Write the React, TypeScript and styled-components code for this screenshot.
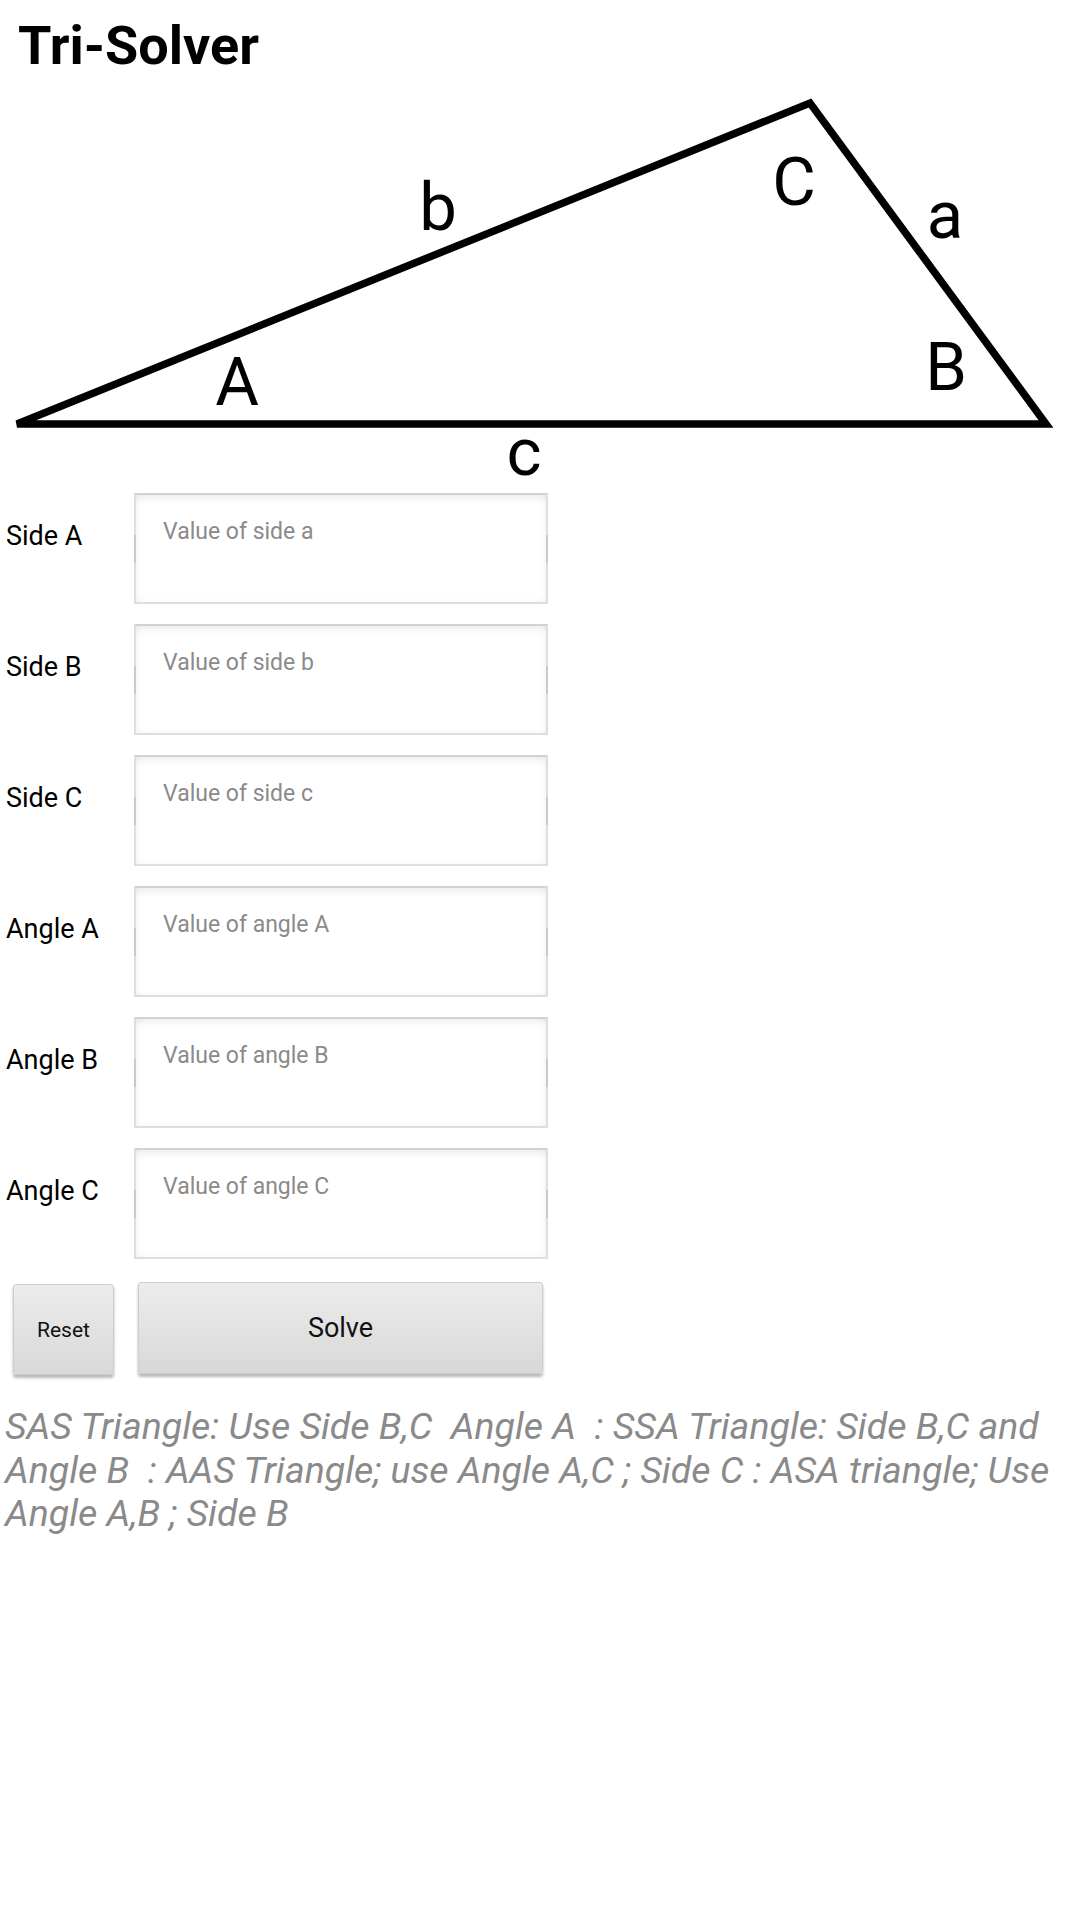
import React from "react";
import styled, { createGlobalStyle } from "styled-components";

const Global = createGlobalStyle`
  html, body {
    margin: 0;
    padding: 0;
    background: #ffffff;
  }
  body {
    font-family: Roboto, "Noto Sans", "Liberation Sans", sans-serif;
    color: #000;
  }
`;

const Page = styled.div`
  width: 1080px;
  min-height: 1920px;
  background: #fff;
  display: flex;
  flex-direction: column;
`;

const Title = styled.h1`
  margin: 0;
  height: 80px;
  box-sizing: border-box;
  padding: 14px 0 0 18px;
  font-family: Roboto, "Liberation Sans", sans-serif;
  font-weight: 700;
  font-size: 54px;
  line-height: normal;
  color: #000;
`;

const Diagram = styled.svg`
  display: block;
  width: 1080px;
  height: 410px;
`;

const DiagramLabel = styled.text`
  font-family: Roboto, "Liberation Sans", sans-serif;
  font-size: 67px;
  fill: #000;
`;

const Form = styled.div`
  display: flex;
  flex-direction: column;
  gap: 20px;
  margin-top: 3px;
  padding-left: 6px;
`;

const Row = styled.div`
  display: grid;
  grid-template-columns: 128px 414px;
  align-items: start;
`;

const Label = styled.label`
  padding-top: 27px;
  font-family: Roboto, "Liberation Sans", sans-serif;
  font-size: 27px;
  line-height: normal;
  color: #000;
`;

const Field = styled.div`
  position: relative;
  width: 414px;
  height: 111px;

  &::before,
  &::after {
    content: "";
    position: absolute;
    top: 42px;
    width: 2px;
    height: 28px;
    background: #c9c9c9;
  }
  &::before {
    left: 0;
  }
  &::after {
    right: 0;
  }
`;

const Input = styled.input`
  box-sizing: border-box;
  width: 100%;
  height: 111px;
  margin: 0;
  padding: 22px 10px 57px 27px;
  border: 2px solid #dedede;
  border-top-color: #d2d2d2;
  border-radius: 0;
  background: #fff;
  box-shadow: inset 0 7px 9px -5px rgba(0, 0, 0, 0.09),
    inset 7px 0 9px -6px rgba(0, 0, 0, 0.05),
    inset -7px 0 9px -6px rgba(0, 0, 0, 0.05),
    inset 0 -5px 7px -5px rgba(0, 0, 0, 0.04);
  font-family: Roboto, "Liberation Sans", sans-serif;
  font-size: 23px;
  line-height: 28px;
  color: #222;
  outline: none;

  &::placeholder {
    color: #8a8a8a;
    opacity: 1;
  }
`;

const Buttons = styled.div`
  display: flex;
  align-items: flex-start;
  gap: 24px;
  margin-top: 23px;
  padding-left: 13px;
`;

const Button = styled.button<{ $w: number; $h: number; $fs: number; $offset?: number }>`
  box-sizing: border-box;
  width: ${(p) => p.$w}px;
  height: ${(p) => p.$h}px;
  margin-top: ${(p) => p.$offset ?? 0}px;
  padding: 0;
  border: 1px solid #cdcdcd;
  border-radius: 3px;
  background: linear-gradient(#ececec, #d8d8d8);
  box-shadow: 0 3px 3px rgba(0, 0, 0, 0.28);
  font-family: Roboto, "Liberation Sans", sans-serif;
  font-size: ${(p) => p.$fs}px;
  color: #111;
  cursor: pointer;
`;

const Note = styled.p`
  margin: 30px 0 0 0;
  padding: 0 12px 0 5px;
  width: 1080px;
  box-sizing: border-box;
  font-family: Roboto, "Liberation Sans", sans-serif;
  font-style: italic;
  font-size: 37.5px;
  line-height: 43.5px;
  color: #8a8a8a;
  white-space: pre-wrap;
`;

const fields = [
  { label: "Side A", placeholder: "Value of side a" },
  { label: "Side B", placeholder: "Value of side b" },
  { label: "Side C", placeholder: "Value of side c" },
  { label: "Angle A", placeholder: "Value of angle A" },
  { label: "Angle B", placeholder: "Value of angle B" },
  { label: "Angle C", placeholder: "Value of angle C" },
];

export default function App() {
  return (
    <Page>
      <Global />
      <Title>Tri-Solver</Title>
      <Diagram viewBox="0 0 1080 410">
        <polygon
          points="17,344 810,23 1046,344"
          fill="none"
          stroke="#000"
          strokeWidth={7.5}
          strokeLinejoin="miter"
        />
        <DiagramLabel x={438} y={150} textAnchor="middle">b</DiagramLabel>
        <DiagramLabel x={794} y={125} textAnchor="middle">C</DiagramLabel>
        <DiagramLabel x={945} y={158} textAnchor="middle">a</DiagramLabel>
        <DiagramLabel x={946} y={310} textAnchor="middle">B</DiagramLabel>
        <DiagramLabel x={237} y={325} textAnchor="middle">A</DiagramLabel>
        <DiagramLabel x={524} y={395} textAnchor="middle">c</DiagramLabel>
      </Diagram>
      <Form>
        {fields.map((f) => (
          <Row key={f.label}>
            <Label>{f.label}</Label>
            <Field>
              <Input type="text" placeholder={f.placeholder} />
            </Field>
          </Row>
        ))}
      </Form>
      <Buttons>
        <Button $w={101} $h={91} $fs={21} $offset={2}>Reset</Button>
        <Button $w={405} $h={92} $fs={27}>Solve</Button>
      </Buttons>
      <Note>
        {"SAS Triangle: Use Side B,C  Angle A  : SSA Triangle: Side B,C and Angle B  : AAS Triangle; use Angle A,C ; Side C : ASA triangle; Use Angle A,B ; Side B"}
      </Note>
    </Page>
  );
}
